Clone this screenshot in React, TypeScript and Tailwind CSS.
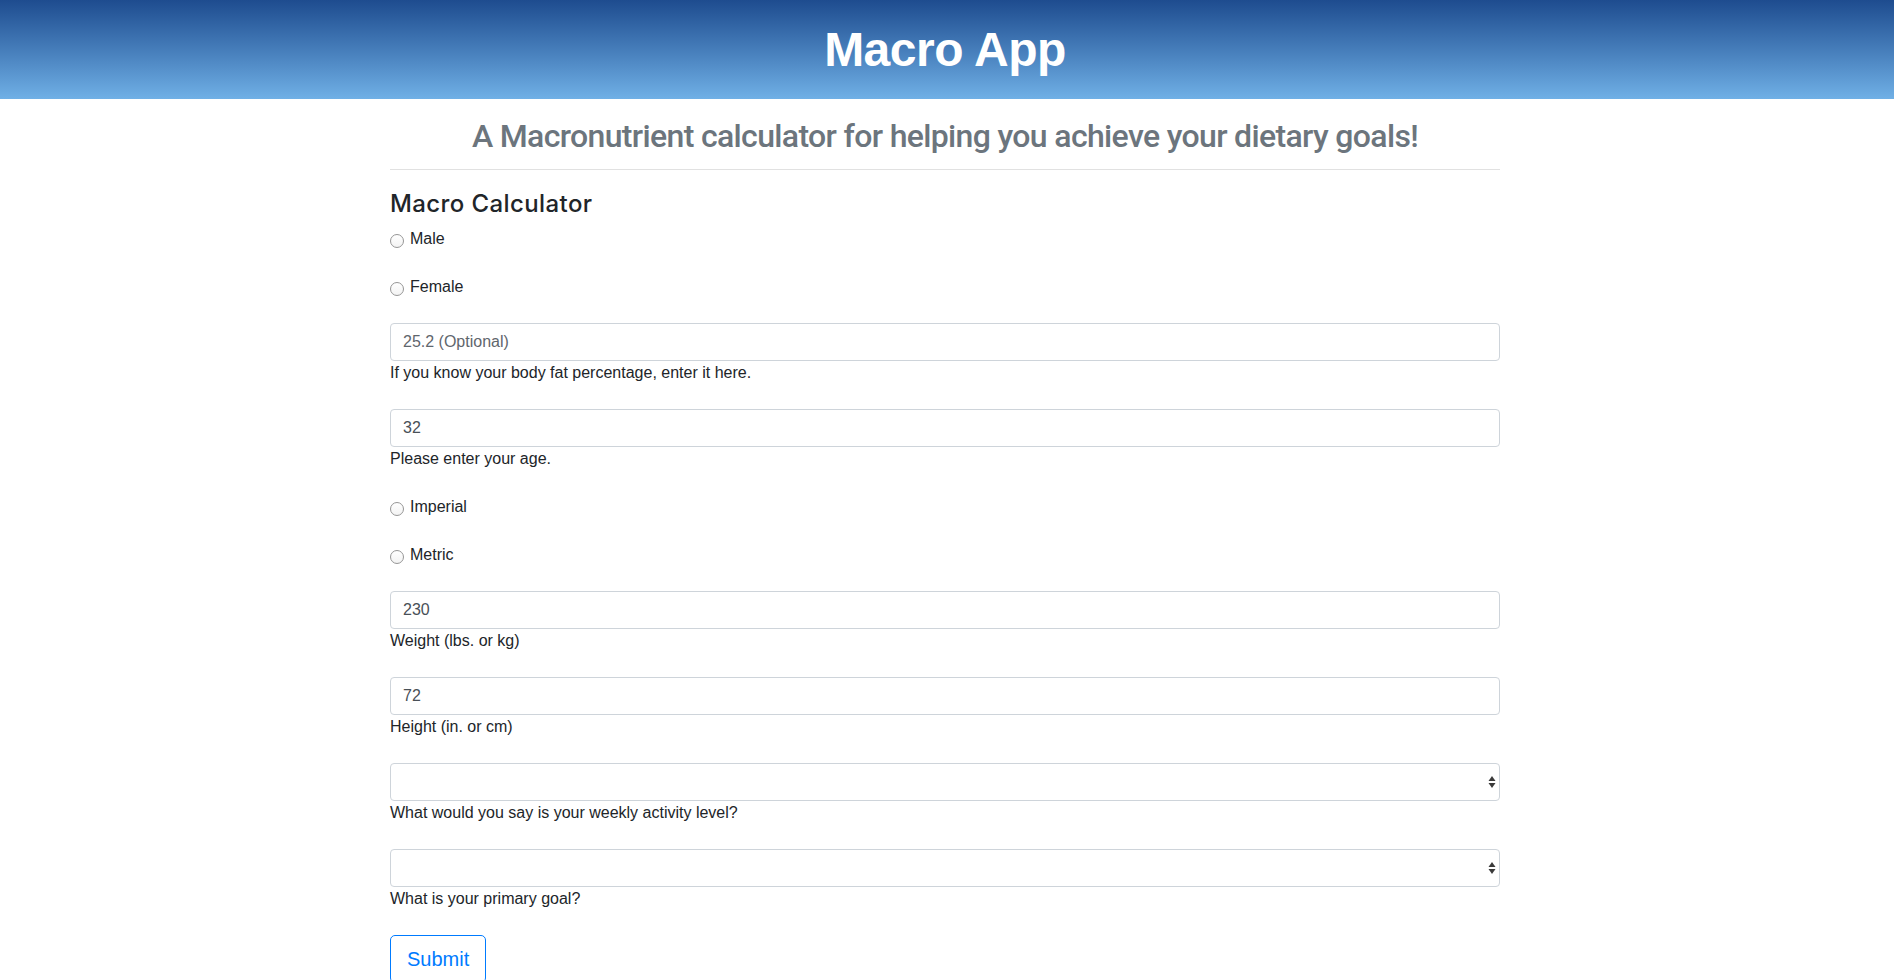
import { useState } from 'react';

const font = "font-['Liberation_Sans',Arial,sans-serif]";

function Radio({ label, name, className }: { label: string; name: string; className?: string }) {
  return (
    <label className={`flex items-start h-6 leading-6 ${className ?? ''}`}>
      <input
        type="radio"
        name={name}
        className="appearance-none mt-[7px] w-[14px] h-[14px] rounded-full border border-[#969696] bg-gradient-to-b from-white to-[#f3f3f3] shrink-0"
      />
      <span className="ml-[6px] text-[16px] text-[#212529]">{label}</span>
    </label>
  );
}

function Field({ value, placeholder, help }: { value?: string; placeholder?: string; help: string }) {
  return (
    <div className="mb-6">
      <input
        type="text"
        defaultValue={value}
        placeholder={placeholder}
        className="block w-full h-[38px] px-3 border border-[#ced4da] rounded-[4px] text-[16px] text-[#495057] placeholder:text-[#5f666d] bg-white outline-none"
      />
      <div className="text-[16px] leading-6 text-[#212529]">{help}</div>
    </div>
  );
}

function SelectField({ help }: { help: string }) {
  return (
    <div className="mb-6">
      <div className="relative">
        <select className="block w-full h-[38px] px-3 appearance-none border border-[#ced4da] rounded-[4px] text-[16px] text-[#495057] bg-white outline-none">
          <option value=""></option>
        </select>
        {/* native-style up/down arrows */}
        <svg
          className="absolute right-[4px] top-1/2 -translate-y-1/2 pointer-events-none"
          width="8"
          height="14"
          viewBox="0 0 8 14"
        >
          <path d="M4 1L7.5 6H0.5z" fill="#3a3a3a" />
          <path d="M4 13L7.5 8H0.5z" fill="#3a3a3a" />
        </svg>
      </div>
      <div className="text-[16px] leading-6 text-[#212529]">{help}</div>
    </div>
  );
}

export default function App() {
  const [submitted, setSubmitted] = useState(false);

  return (
    <div className={`w-full bg-white ${font}`}>
      {/* Header */}
      <header className="h-[99px] pr-[4px] flex items-center justify-center bg-gradient-to-b from-[#1e4c8f] to-[#70b0e6]">
        <h1 className="text-[48px] font-bold leading-none text-white tracking-[-0.5px]">Macro App</h1>
      </header>

      <div className="pr-[4px]">
        <div className="w-[1110px] mx-auto">
          <h2 className="pt-[18px] text-center font-['Roboto',Arial,sans-serif] text-[32px] leading-[38px] font-medium text-[#6c757d] tracking-[-0.65px]">
            A Macronutrient calculator for helping you achieve your dietary goals!
          </h2>
          <hr className="mt-[14px] border-0 border-t border-[#e1e1e1]" />

          <h4 className="mt-[19px] mb-[9px] font-['Inter',Arial,sans-serif] text-[24px] leading-[29px] font-medium text-[#212529] tracking-[0.4px]">
            Macro Calculator
          </h4>

          <form
            onSubmit={(e) => {
              e.preventDefault();
              setSubmitted(!submitted);
            }}
          >
            <Radio name="sex" label="Male" className="mb-6" />
            <Radio name="sex" label="Female" className="mb-6" />

            <Field placeholder="25.2 (Optional)" help="If you know your body fat percentage, enter it here." />
            <Field value="32" help="Please enter your age." />

            <Radio name="units" label="Imperial" className="mb-6" />
            <Radio name="units" label="Metric" className="mb-6" />

            <Field value="230" help="Weight (lbs. or kg)" />
            <Field value="72" help="Height (in. or cm)" />

            <SelectField help="What would you say is your weekly activity level?" />
            <SelectField help="What is your primary goal?" />

            <button
              type="submit"
              className="px-4 py-2 text-[20px] leading-[30px] text-[#007bff] border border-[#007bff] rounded-[5px] bg-white"
            >
              Submit
            </button>
          </form>
          <div className="h-8" />
        </div>
      </div>
    </div>
  );
}
